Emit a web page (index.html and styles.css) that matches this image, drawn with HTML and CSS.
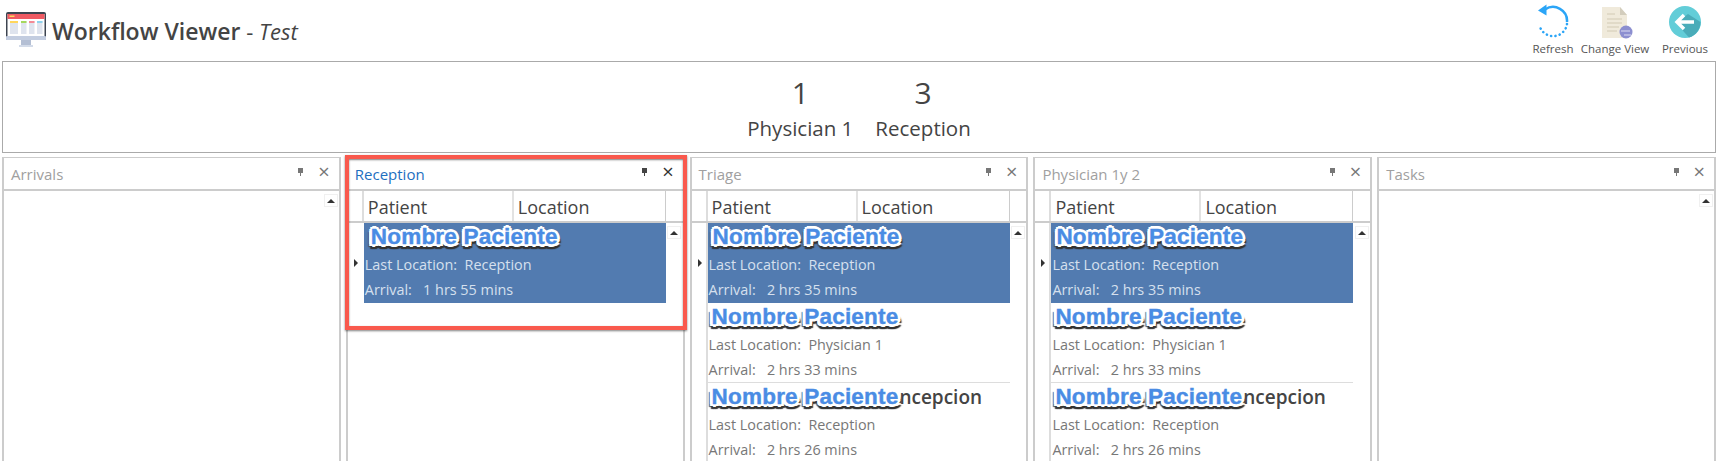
FILE: index.html
```html
<!DOCTYPE html>
<html lang="en">
<head>
    <meta charset="UTF-8">
    <title>Workflow Viewer</title>
    <link rel="stylesheet" href="styles.css">
</head>
<body>
    <header class="topbar">
        <div class="brand">
            <svg class="brand-icon" viewBox="0 0 40 36" width="40" height="36">
                <rect x="0" y="0" width="40" height="28" rx="2" fill="#3d4450"/>
                <rect x="1.5" y="2" width="37" height="22" fill="#fff"/>
                <rect x="1.5" y="2" width="37" height="5" fill="#ef5a63"/>
                <rect x="3.500" y="3.500" width="5" height="1.500" fill="#ffd65c"/>
                <rect x="4" y="9" width="8" height="13" fill="#dfe4ee"/>
                <rect x="15" y="9" width="5.500" height="13" fill="#dfe4ee"/>
                <rect x="23" y="9" width="5.500" height="13" fill="#dfe4ee"/>
                <rect x="31" y="9" width="5.500" height="13" fill="#dfe4ee"/>
                <rect x="4" y="9" width="8" height="2" fill="#ffd65c"/>
                <rect x="15" y="9" width="5.500" height="2" fill="#a5d85c"/>
                <rect x="23" y="9" width="5.500" height="2" fill="#f58a95"/>
                <rect x="31" y="9" width="5.500" height="2" fill="#8fd3ee"/>
                <rect x="0" y="24" width="40" height="4" rx="1" fill="#c3cde0"/>
                <rect x="15" y="28" width="10" height="5" fill="#b4bfd4"/>
                <rect x="13" y="33" width="14" height="2" fill="#d3dbe9"/>
            </svg>
            <h1 class="title">Workflow Viewer <span class="subtitle">- <em>Test</em></span></h1>
        </div>
        <nav class="toolbar">
            <div class="tool tool-refresh">
                <svg viewBox="0 0 36 36" width="36" height="36">
                    <path d="M10 6.500 A14 14 0 0 1 32 19" fill="none" stroke="#2ba5f7" stroke-width="2.500"/>
                    <path d="M32 21 A14 14 0 0 1 5 24" fill="none" stroke="#2ba5f7" stroke-width="2.600" stroke-dasharray="0.100 4.300" stroke-linecap="round"/>
                    <path d="M11.500 1.500 L11.500 12.500 L3 7.500 Z" fill="#2ba5f7"/>
                </svg>
                <span>Refresh</span>
            </div>
            <div class="tool tool-view">
                <svg viewBox="0 0 36 36" width="36" height="36">
                    <path d="M5 4 H23 L30 12 V35 H5 Z" fill="#f0eadb"/>
                    <path d="M23 4 L30 12 H23 Z" fill="#d3cdbd"/>
                    <path d="M10 11 H18 M10 16 H25 M10 20 H25 M10 24 H22 M10 28 H20" stroke="#d2cab4" stroke-width="1"/>
                    <circle cx="29" cy="29" r="6.500" fill="#8c8fd0"/>
                    <path d="M24 28 H33 M27 32 H34" stroke="#dcdcf2" stroke-width="1"/>
                </svg>
                <span>Change View</span>
            </div>
            <div class="tool tool-prev">
                <svg viewBox="0 0 36 36" width="36" height="36">
                    <circle cx="18" cy="19" r="16" fill="#62cdd8"/>
                    <path d="M21 11 L33.500 19 A16 16 0 0 1 22 34.500 L9 20 Z" fill="#4aacb9"/>
                    <path d="M17 12 L10 19 L17 26 M10.500 19 H27" fill="none" stroke="#fff" stroke-width="3.500"/>
                </svg>
                <span>Previous</span>
            </div>
        </nav>
    </header>

    <section class="summary">
        <div class="stat">
            <div class="stat-num">1</div>
            <div class="stat-label">Physician 1</div>
        </div>
        <div class="stat">
            <div class="stat-num">3</div>
            <div class="stat-label">Reception</div>
        </div>
    </section>

    <main class="panels">
        <div class="panel">
            <div class="panel-head">
                <span class="panel-title">Arrivals</span>
                <span class="pin"></span><span class="close">×</span>
            </div>
            <div class="panel-empty"><span class="scroll-btn"></span></div>
        </div>

        <div class="panel panel-active">
            <div class="panel-head">
                <span class="panel-title">Reception</span>
                <span class="pin"></span><span class="close">×</span>
            </div>
            <div class="grid-head">
                <div class="col-ind"></div>
                <div class="col-patient">Patient</div>
                <div class="col-location">Location</div>
                <div class="col-end"></div>
            </div>
            <div class="grid-body">
                <div class="col-ind"><span class="row-arrow"></span></div>
                <div class="rows">
                    <div class="row row-selected">
                        <div class="row-name"><span class="name">Nombre Paciente</span></div>
                        <div class="row-line">Last Location:&nbsp; Reception</div>
                        <div class="row-line">Arrival: &nbsp; 1 hrs 55 mins</div>
                    </div>
                </div>
                <div class="col-end"><span class="scroll-btn"></span></div>
            </div>
        </div>

        <div class="panel">
            <div class="panel-head">
                <span class="panel-title">Triage</span>
                <span class="pin"></span><span class="close">×</span>
            </div>
            <div class="grid-head">
                <div class="col-ind"></div>
                <div class="col-patient">Patient</div>
                <div class="col-location">Location</div>
                <div class="col-end"></div>
            </div>
            <div class="grid-body">
                <div class="col-ind"><span class="row-arrow"></span></div>
                <div class="rows">
                    <div class="row row-selected">
                        <div class="row-name"><span class="name">Nombre Paciente</span></div>
                        <div class="row-line">Last Location:&nbsp; Reception</div>
                        <div class="row-line">Arrival: &nbsp; 2 hrs 35 mins</div>
                    </div>
                    <div class="row row-split">
                        <div class="row-name row-name-low"><span class="name">Nombre Paciente</span></div>
                        <div class="row-line">Last Location:&nbsp; Physician 1</div>
                        <div class="row-line">Arrival: &nbsp; 2 hrs 33 mins</div>
                    </div>
                    <div class="row">
                        <div class="row-name row-name-low"><span class="name">Nombre Paciente</span><span class="name-rest">ncepcion</span></div>
                        <div class="row-line">Last Location:&nbsp; Reception</div>
                        <div class="row-line">Arrival: &nbsp; 2 hrs 26 mins</div>
                    </div>
                </div>
                <div class="col-end"><span class="scroll-btn"></span></div>
            </div>
        </div>

        <div class="panel">
            <div class="panel-head">
                <span class="panel-title">Physician 1y 2</span>
                <span class="pin"></span><span class="close">×</span>
            </div>
            <div class="grid-head">
                <div class="col-ind"></div>
                <div class="col-patient">Patient</div>
                <div class="col-location">Location</div>
                <div class="col-end"></div>
            </div>
            <div class="grid-body">
                <div class="col-ind"><span class="row-arrow"></span></div>
                <div class="rows">
                    <div class="row row-selected">
                        <div class="row-name"><span class="name">Nombre Paciente</span></div>
                        <div class="row-line">Last Location:&nbsp; Reception</div>
                        <div class="row-line">Arrival: &nbsp; 2 hrs 35 mins</div>
                    </div>
                    <div class="row row-split">
                        <div class="row-name row-name-low"><span class="name">Nombre Paciente</span></div>
                        <div class="row-line">Last Location:&nbsp; Physician 1</div>
                        <div class="row-line">Arrival: &nbsp; 2 hrs 33 mins</div>
                    </div>
                    <div class="row">
                        <div class="row-name row-name-low"><span class="name">Nombre Paciente</span><span class="name-rest">ncepcion</span></div>
                        <div class="row-line">Last Location:&nbsp; Reception</div>
                        <div class="row-line">Arrival: &nbsp; 2 hrs 26 mins</div>
                    </div>
                </div>
                <div class="col-end"><span class="scroll-btn"></span></div>
            </div>
        </div>

        <div class="panel">
            <div class="panel-head">
                <span class="panel-title">Tasks</span>
                <span class="pin"></span><span class="close">×</span>
            </div>
            <div class="panel-empty"><span class="scroll-btn"></span></div>
        </div>
    </main>
</body>
</html>
```

FILE: styles.css
```css
html, body {
    height: 100%;
}
body {
    margin: 0;
    overflow: hidden;
    background-color: #fff;
    color: #444;
    font-family: "Open Sans", "Noto Sans", sans-serif;
}

/* top bar */
.topbar {
    height: 61px;
    box-sizing: border-box;
    display: flex;
    justify-content: space-between;
    padding: 0 0 0 6px;
}
.brand {
    display: flex;
    align-items: flex-start;
    padding-top: 12px;
    gap: 6px;
}
.title {
    margin: 3px 0 0;
    font-size: 23px;
    line-height: 32px;
    font-weight: 600;
    color: #444;
}
.subtitle {
    font-weight: 400;
    font-size: 22px;
}
.toolbar {
    display: flex;
    padding-top: 3px;
}
.tool {
    display: flex;
    flex-direction: column;
    align-items: center;
    font-size: 11.500px;
    line-height: 14px;
    color: #555;
    white-space: nowrap;
}
.tool-refresh { width: 52px; }
.tool-view { width: 72px; }
.tool-prev { width: 68px; }
.tool svg {
    display: block;
    margin-bottom: 3px;
}

/* summary */
.summary {
    height: 92px;
    box-sizing: border-box;
    margin: 0 3px 0 2px;
    border: 1px solid #aaa;
    display: flex;
    justify-content: center;
    gap: 22px;
    text-align: center;
}
.stat-num {
    font-size: 30px;
    line-height: 40px;
    margin-top: 11px;
}
.stat-label {
    font-size: 20.500px;
    line-height: 28px;
    margin-top: 1px;
}

/* panels */
.panels {
    display: flex;
    gap: 5px;
    margin: 4px 3px 0 2px;
    height: 320px;
}
.panel {
    flex: 1;
    position: relative;
    display: flex;
    flex-direction: column;
    border: 2px solid #ccc;
    border-width: 1px 2px;
    box-sizing: border-box;
    min-width: 0;
}
.panel-head {
    height: 31px;
    flex: none;
    display: flex;
    align-items: center;
    padding: 0 9px 0 7px;
    border-bottom: 2px solid #ccc;
    box-sizing: content-box;
}
.panel-title {
    flex: 1;
    font-size: 15px;
    color: #a0a0a0;
}
.panel-active .panel-title {
    color: #1e6fbf;
}
.pin {
    width: 5px;
    height: 5px;
    margin: 0 15px 6px 0;
    background-color: #777;
    position: relative;
}
.pin::after {
    content: "";
    position: absolute;
    left: 2px;
    top: 5px;
    width: 1px;
    height: 3px;
    background-color: #777;
}
.close {
    font-size: 20px;
    line-height: 20px;
    color: #777;
    margin-bottom: 3px;
}
.panel-active .pin, .panel-active .pin::after {
    background-color: #444;
}
.panel-active .close {
    color: #333;
}
/* red annotation round the active panel */
.panel-active::after {
    content: "";
    position: absolute;
    left: -3px;
    right: -4px;
    top: -3px;
    height: 167px;
    border: 4px solid #f9594d;
    box-shadow: 0 1px 2px rgba(0, 0, 0, 0.5), inset 0 1px 2px rgba(0, 0, 0, 0.5);
    pointer-events: none;
}
.panel-empty {
    flex: 1;
    position: relative;
    padding: 3px 1px 0 0;
    display: flex;
    justify-content: flex-end;
    align-items: flex-start;
}
.scroll-btn {
    display: flex;
    align-items: center;
    justify-content: center;
    width: 14px;
    height: 13px;
    border: 1px solid #f0f0f0;
    box-sizing: border-box;
}
.scroll-btn::before {
    content: "";
    border-left: 4px solid transparent;
    border-right: 4px solid transparent;
    border-bottom: 4px solid #333;
}

/* patient grid */
.grid-head {
    display: flex;
    height: 30px;
    flex: none;
    border-bottom: 2px solid #ccc;
    font-size: 18px;
    line-height: 32px;
    color: #444;
}
.col-ind {
    width: 14px;
    flex: none;
    border-right: 2px solid #ddd;
}
.col-patient {
    width: 144px;
    flex: none;
    padding-left: 4px;
    border-right: 2px solid #e2e2e2;
}
.col-location {
    width: 147px;
    flex: none;
    padding-left: 4px;
    border-right: 1px solid #ccc;
}
.col-end {
    flex: 1;
    display: flex;
    justify-content: center;
    padding-top: 3px;
}
.grid-body {
    flex: 1;
    display: flex;
    min-height: 0;
}
.grid-body .col-ind {
    padding-top: 36px;
    box-sizing: content-box;
}
.panel-active .grid-body .col-ind {
    border-right-color: transparent;
}
.row-arrow {
    display: block;
    margin-left: 6px;
    width: 0;
    border-top: 4px solid transparent;
    border-bottom: 4px solid transparent;
    border-left: 4px solid #333;
}
.rows {
    width: 302px;
    flex: none;
}
.row {
    height: 80px;
    padding-left: 1px;
    font-size: 14.400px;
    color: #777;
}
.row-selected {
    background-color: #527bb0;
    color: #d6e0ee;
}
.row-split {
    border-bottom: 1px solid #ddd;
    box-sizing: border-box;
    height: 80px;
}
.row-name {
    height: 29px;
    line-height: 28px;
    white-space: nowrap;
    padding-left: 4px;
}
.row-name-low {
    padding-left: 3px;
}
.panel-active .row-name {
    padding-left: 6px;
}
.name {
    font-family: "Liberation Sans", Arial, sans-serif;
    font-weight: bold;
    font-size: 22.500px;
    color: #4a8ce4;
    letter-spacing: 0.2px;
    -webkit-text-stroke: 0.4px #4a8ce4;
    text-shadow:
        2px 0 0 #fff, -2px 0 0 #fff, 0 2px 0 #fff, 0 -2px 0 #fff,
        3px 0 0 #fff, -3px 0 0 #fff, 0 3px 0 #fff, 0 -3px 0 #fff,
        2px 2px 0 #fff, -2px 2px 0 #fff, 2px -2px 0 #fff, -2px -2px 0 #fff,
        3px 2px 0 #fff, -3px 2px 0 #fff,
        0 5px 1px #333, 2px 5px 1px #333, -2px 5px 1px #333, 4px 4px 1px #333, -4px 3px 1px #555;
}
.name-rest {
    font-size: 19px;
    font-weight: 600;
    color: #444;
    margin-left: 1px;
}
.row-line {
    height: 25px;
    line-height: 25px;
    white-space: nowrap;
}
```
